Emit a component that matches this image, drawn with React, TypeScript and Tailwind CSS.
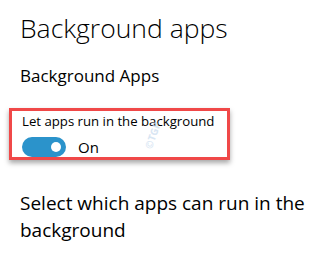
import React from "react";

export default function App() {
  const font = { fontFamily: '"Open Sans", "Noto Sans", sans-serif' };
  return (
    <div className="w-[330px] h-[263px] bg-white overflow-hidden relative text-black" style={font}>
      <div className="flex flex-col pl-[20px]">
        <div className="h-[32px] mt-[12px] text-[26.5px] leading-[32px] font-light">Background apps</div>
        <div className="h-[24px] mt-[20px] text-[17px] leading-[24px]">Background Apps</div>
        <div className="mt-[20px] -ml-[11px] w-[221px] h-[52px] border-[3px] border-[#f04848] shadow-[0_3px_5px_rgba(0,0,0,0.35)] pl-[10px] flex flex-col">
          <div className="text-[13.2px] leading-[18px] mt-[1px]">Let apps run in the background</div>
          <div className="flex items-center mt-[7px] gap-[12px]">
            <div className="w-[44px] h-[20px] rounded-full bg-[#2b93cb] flex items-center justify-end pr-[5px]">
              <div className="w-[10px] h-[10px] rounded-full bg-white" />
            </div>
            <div className="text-[15px] leading-[20px]">On</div>
          </div>
        </div>
        <div className="mt-[30px] text-[19px] leading-[27px] w-[300px]">Select which apps can run in the background</div>
      </div>
      <div className="absolute left-[139px] top-[128px] -rotate-[70deg] text-[10px] font-bold text-[#c9dcef] opacity-70">©TGP</div>
    </div>
  );
}
